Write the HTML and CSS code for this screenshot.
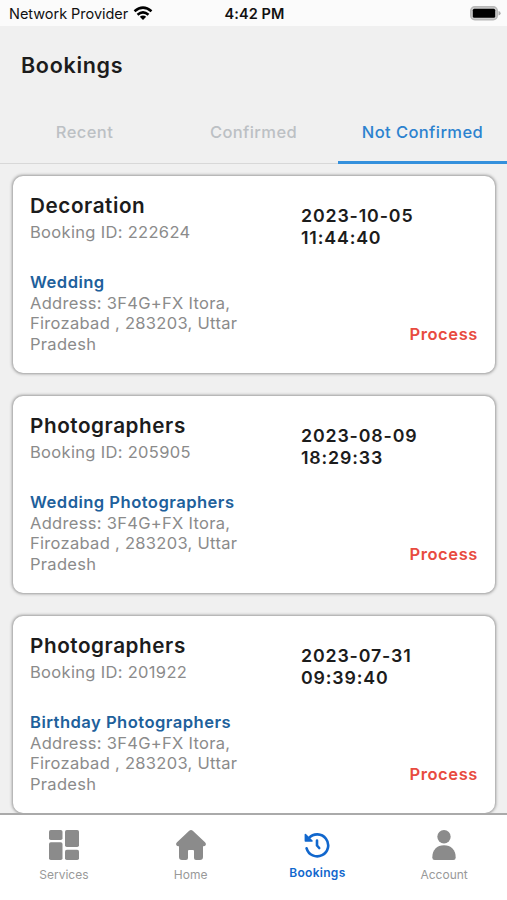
FILE: index.html
```html
<!DOCTYPE html>
<html lang="en">
<head>
<meta charset="utf-8">
<title>Bookings</title>
<link rel="stylesheet" href="styles.css">
</head>
<body>
<div class="app">
  <header class="status">
    <div class="carrier"><span class="provider">Network Provider</span>
      <svg class="wifi" width="20" height="15" viewBox="0 0 20 15"><g fill="none" stroke="#000" stroke-width="2.5"><path d="M1.5 5.3Q10-2 18.5 5.3"/><path d="M4.5 8.7Q10 4 15.5 8.7"/></g><path d="M6.8 10.8Q10 8.3 13.2 10.8L10 14Z"/></svg>
    </div>
    <div class="clock">4:42 PM</div>
    <svg class="battery" width="32" height="15" viewBox="0 0 32 15"><rect x=".8" y=".8" width="26.4" height="12.9" rx="4" fill="#ccc" stroke="#b8b8b8" stroke-width="1.6"/><rect x="2.8" y="2.8" width="22.4" height="8.9" rx="1.5"/><path d="M28.5 5Q30.6 5.3 30.6 7.3T28.5 9.6Z" fill="#aaa"/></svg>
  </header>
  <h1 class="title">Bookings</h1>
  <nav class="tabs">
    <span class="tab">Recent</span>
    <span class="tab">Confirmed</span>
    <span class="tab tab-active">Not Confirmed</span>
  </nav>
  <main class="list">
    <article class="card">
      <div class="info">
        <h2 class="name">Decoration</h2>
        <p class="id">Booking ID: 222624</p>
        <h3 class="kind">Wedding</h3>
        <p class="address">Address: 3F4G+FX Itora,<br>Firozabad , 283203, Uttar<br>Pradesh</p>
      </div>
      <div class="side"><p class="date">2023-10-05<br>11:44:40</p><p class="state">Process</p></div>
    </article>
    <article class="card">
      <div class="info">
        <h2 class="name">Photographers</h2>
        <p class="id">Booking ID: 205905</p>
        <h3 class="kind">Wedding Photographers</h3>
        <p class="address">Address: 3F4G+FX Itora,<br>Firozabad , 283203, Uttar<br>Pradesh</p>
      </div>
      <div class="side"><p class="date">2023-08-09<br>18:29:33</p><p class="state">Process</p></div>
    </article>
    <article class="card">
      <div class="info">
        <h2 class="name">Photographers</h2>
        <p class="id">Booking ID: 201922</p>
        <h3 class="kind">Birthday Photographers</h3>
        <p class="address">Address: 3F4G+FX Itora,<br>Firozabad , 283203, Uttar<br>Pradesh</p>
      </div>
      <div class="side"><p class="date">2023-07-31<br>09:39:40</p><p class="state">Process</p></div>
    </article>
  </main>
  <footer class="bar">
    <div class="item">
      <svg width="30" height="30" viewBox="0 0 30 30" fill="#8b8b8b"><rect width="13.5" height="10" rx="1.8"/><rect y="12.3" width="13.5" height="17.7" rx="1.8"/><rect x="16" width="14" height="17" rx="1.8"/><rect x="16" y="19.7" width="14" height="10.3" rx="1.8"/></svg>
      <span class="label">Services</span>
    </div>
    <div class="item">
      <svg width="30" height="30" viewBox="0 0 30 30" fill="#8b8b8b"><path d="M13.2.8Q15-.7 16.8.8L29 12.2Q30.6 13.7 29.4 15.5Q28.6 16.5 27 16.2V27Q27 30 24 30H20Q18 30 18 28V21Q18 20 17 20H13Q12 20 12 21V28Q12 30 10 30H6Q3 30 3 27V16.2Q1.4 16.5.6 15.5Q-.6 13.7 1 12.2Z"/></svg>
      <span class="label">Home</span>
    </div>
    <div class="item item-active">
      <svg width="26" height="26" viewBox="0 0 26 26" fill="none" stroke="#1167cd" stroke-width="2.6" stroke-linecap="round" stroke-linejoin="round"><path d="M5 6A11 11 0 1 1 2.6 16.3"/><path d="M1.4 2.5V9H8Z" fill="#1167cd" stroke-width="1.6"/><path d="M13 8.5V13.5L15.2 16"/></svg>
      <span class="label">Bookings</span>
    </div>
    <div class="item">
      <svg width="30" height="30" viewBox="0 0 30 30" fill="#8b8b8b"><circle cx="15" cy="6.7" r="6.7"/><path d="M3.3 27.5C3.3 19.8 8 15.3 15 15.3S26.7 19.8 26.7 27.5Q26.7 30 24.3 30H5.7Q3.3 30 3.3 27.5Z"/></svg>
      <span class="label">Account</span>
    </div>
  </footer>
</div>
</body>
</html>
```
FILE: styles.css
```css
* { box-sizing: border-box; margin: 0; padding: 0; }
body { font-family: Inter, "Liberation Sans", sans-serif; color: #1c1c1c; }
svg { display: block; flex: none; }
.app { width: 507px; height: 900px; display: flex; flex-direction: column; background: #f0f0f0; overflow: hidden; }
.status { height: 26px; flex: none; display: grid; grid-template-columns: 1fr auto 1fr; align-items: center; padding: 2px 5px 0 9px; background: #fbfbfb; color: #111; font-size: 14.5px; line-height: 22px; }
.carrier { display: flex; align-items: center; gap: 5px; }
.provider { letter-spacing: -.03px; white-space: nowrap; }
.clock { font-weight: 600; letter-spacing: .1px; margin-left: -2px; }
.battery { justify-self: end; margin-top: -2px; }
.carrier .wifi { margin-top: -2px; }
.title { flex: none; height: 76px; padding: 25px 21px 0; font-size: 21.5px; line-height: 28px; font-weight: 600; letter-spacing: .7px; }
.tabs { flex: none; height: 62px; display: grid; grid-template-columns: repeat(3, 1fr); border-bottom: 1px solid #d8d8d8; }
.tab { display: flex; align-items: flex-start; justify-content: center; padding-top: 20px; font-size: 16.5px; line-height: 20px; font-weight: 500; letter-spacing: .4px; color: #bcc0c4; }
.tab-active { color: #2c82cf; border-bottom: 3px solid #3490dc; margin-bottom: -1px; }
.list { flex: 1; min-height: 0; display: flex; flex-direction: column; gap: 23px; padding: 12px 12px 0 13px; overflow: hidden; }
.card { flex: none; height: 197px; display: flex; padding: 16px 17px 0; background: #fff; border-radius: 10px; box-shadow: 0 0 3px 1px #999; }
.info { width: 271px; flex: none; }
.name { font-size: 20.7px; line-height: 28px; font-weight: 600; letter-spacing: .56px; }
.id { font-size: 16.5px; line-height: 24px; letter-spacing: .32px; color: #8b8b8b; }
.kind { margin-top: 27.5px; font-size: 16.6px; line-height: 21px; font-weight: 600; letter-spacing: .46px; color: #20609b; }
.address { font-size: 16.5px; line-height: 20.7px; letter-spacing: .3px; color: #8b8b8b; }
.side { flex: 1; display: flex; flex-direction: column; height: 156px; padding-top: 13px; }
.date { font-size: 17.8px; line-height: 22px; font-weight: 600; letter-spacing: .85px; }
.state { margin-top: auto; height: 28px; line-height: 28px; align-self: flex-end; color: #e84b40; font-size: 16.5px; font-weight: 600; letter-spacing: .6px; }
.bar { flex: none; height: 87px; display: grid; grid-template-columns: repeat(4, 1fr); background: #fff; border-top: 2px solid #aaa; }
.item { display: flex; flex-direction: column; align-items: center; gap: 6px; padding: 15px 0 0 1px; color: #999; font-size: 12px; line-height: 18px; letter-spacing: 0; }
.item-active { color: #1167cd; font-weight: 600; padding-top: 17px; gap: 6px; letter-spacing: .3px; }
```
